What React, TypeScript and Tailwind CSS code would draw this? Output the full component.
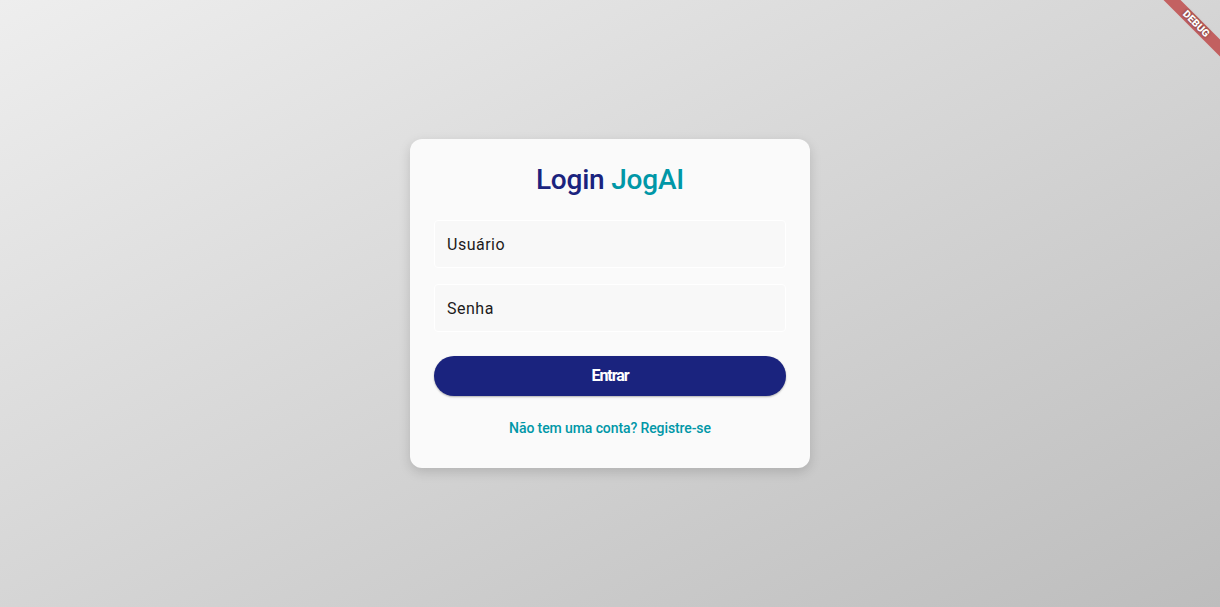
import React from "react"

export default function App() {
  return (
    <div className="relative h-[607px] w-full overflow-hidden bg-gradient-to-br from-[#eeeeee] to-[#bdbdbd] font-['Roboto',sans-serif]">
      <div className="flex h-full items-center justify-center">
        {/* Login card */}
        <div className="w-[400px] rounded-xl bg-[#fafafa] px-6 pt-6 pb-6 shadow-[0_4px_12px_rgba(0,0,0,0.15)]">
          <h1 className="h-[34px] text-center text-[28px] leading-[34px] font-medium tracking-[-0.2px]">
            <span className="text-[#1a237e]">Login </span>
            <span className="text-[#0097a7]">JogAI</span>
          </h1>

          <div className="mt-[23px] flex flex-col gap-4">
            <input
              placeholder="Usuário"
              className="h-12 w-full rounded border border-white bg-[#f8f8f8] px-3 text-base tracking-[0.5px] text-[#1d1b20] outline-none placeholder:text-[#1d1b20]"
            />
            <input
              type="password"
              placeholder="Senha"
              className="h-12 w-full rounded border border-white bg-[#f8f8f8] px-3 text-base tracking-[0.5px] text-[#1d1b20] outline-none placeholder:text-[#1d1b20]"
            />
          </div>

          <button className="mt-6 h-10 w-full rounded-full bg-[#1a237e] text-base font-bold tracking-[-1.1px] text-white shadow-[0_1px_2px_rgba(0,0,0,0.3)]">
            Entrar
          </button>

          <div className="mt-4 flex h-8 items-center justify-center">
            <button className="text-sm font-medium tracking-[-0.1px] text-[#0097a7]">
              Não tem uma conta? Registre-se
            </button>
          </div>
        </div>
      </div>

      {/* Debug banner */}
      <div className="absolute top-[18px] left-[1156px] flex h-3 w-20 rotate-45 items-center justify-center bg-[#b71c1c]/[0.63]">
        <span className="text-[10.2px] leading-none font-black text-white [text-shadow:0_0_3px_rgba(0,0,0,0.5)]">
          DEBUG
        </span>
      </div>
    </div>
  )
}
